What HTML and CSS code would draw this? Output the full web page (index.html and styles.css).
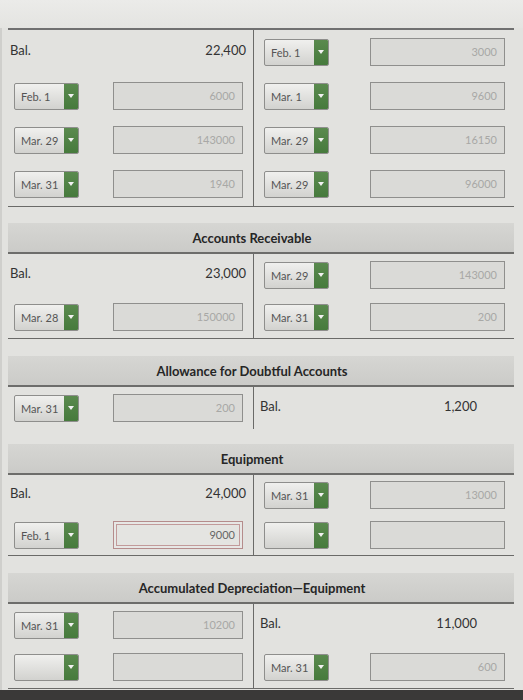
FILE: index.html
```html
<!DOCTYPE html>
<html>
<head>
<meta charset="utf-8">
<link rel="stylesheet" href="styles.css">
</head>
<body>
<div class="page">
  <div class="topstrip"></div>

  <section class="acct first">
    <div class="tbody tall">
      <div class="col left">
        <div class="row bal"><span>Bal.</span><span>22,400</span></div>
        <div class="row"><div class="dd"><span class="v">Feb. 1</span><span class="arr"></span></div><div class="inp">6000</div></div>
        <div class="row"><div class="dd"><span class="v">Mar. 29</span><span class="arr"></span></div><div class="inp">143000</div></div>
        <div class="row"><div class="dd"><span class="v">Mar. 31</span><span class="arr"></span></div><div class="inp">1940</div></div>
      </div>
      <div class="col right">
        <div class="row"><div class="dd"><span class="v">Feb. 1</span><span class="arr"></span></div><div class="inp">3000</div></div>
        <div class="row"><div class="dd"><span class="v">Mar. 1</span><span class="arr"></span></div><div class="inp">9600</div></div>
        <div class="row"><div class="dd"><span class="v">Mar. 29</span><span class="arr"></span></div><div class="inp">16150</div></div>
        <div class="row"><div class="dd"><span class="v">Mar. 29</span><span class="arr"></span></div><div class="inp">96000</div></div>
      </div>
    </div>
  </section>

  <section class="acct">
    <div class="title">Accounts Receivable</div>
    <div class="tbody">
      <div class="col left">
        <div class="row bal"><span>Bal.</span><span>23,000</span></div>
        <div class="row"><div class="dd"><span class="v">Mar. 28</span><span class="arr"></span></div><div class="inp">150000</div></div>
      </div>
      <div class="col right">
        <div class="row"><div class="dd"><span class="v">Mar. 29</span><span class="arr"></span></div><div class="inp">143000</div></div>
        <div class="row"><div class="dd"><span class="v">Mar. 31</span><span class="arr"></span></div><div class="inp">200</div></div>
      </div>
    </div>
  </section>

  <section class="acct narrow-gap">
    <div class="title">Allowance for Doubtful Accounts</div>
    <div class="tbody open">
      <div class="col left">
        <div class="row"><div class="dd"><span class="v">Mar. 31</span><span class="arr"></span></div><div class="inp">200</div></div>
      </div>
      <div class="col right">
        <div class="row bal"><span>Bal.</span><span>1,200</span></div>
      </div>
    </div>
  </section>

  <section class="acct">
    <div class="title">Equipment</div>
    <div class="tbody short">
      <div class="col left">
        <div class="row bal"><span>Bal.</span><span>24,000</span></div>
        <div class="row"><div class="dd"><span class="v">Feb. 1</span><span class="arr"></span></div><div class="inp err">9000</div></div>
      </div>
      <div class="col right">
        <div class="row"><div class="dd"><span class="v">Mar. 31</span><span class="arr"></span></div><div class="inp">13000</div></div>
        <div class="row"><div class="dd"><span class="v"></span><span class="arr"></span></div><div class="inp"></div></div>
      </div>
    </div>
  </section>

  <section class="acct last">
    <div class="title">Accumulated Depreciation&#8212;Equipment</div>
    <div class="tbody">
      <div class="col left">
        <div class="row"><div class="dd"><span class="v">Mar. 31</span><span class="arr"></span></div><div class="inp">10200</div></div>
        <div class="row"><div class="dd"><span class="v"></span><span class="arr"></span></div><div class="inp"></div></div>
      </div>
      <div class="col right">
        <div class="row bal"><span>Bal.</span><span>11,000</span></div>
        <div class="row"><div class="dd"><span class="v">Mar. 31</span><span class="arr"></span></div><div class="inp">600</div></div>
      </div>
    </div>
  </section>

  <div class="bottomstrip"></div>
</div>
</body>
</html>
```

FILE: styles.css
```css
*, *::before, *::after {
  box-sizing: border-box;
}
html, body {
  margin: 0;
  padding: 0;
}
body {
  width: 523px;
  height: 700px;
  overflow: hidden;
  background: #e2e2df;
  font-family: Lato, "Open Sans", sans-serif;
  color: #2e2e2e;
}
.page {
  display: flex;
  flex-direction: column;
  height: 700px;
  padding-left: 4px;
  border-left: 2px solid #cfcfcc;
}
.page > * {
  flex-shrink: 0;
}
.topstrip {
  height: 28px;
  margin-left: -6px;
  background: linear-gradient(#ebebe9, #e4e4e1);
}
.acct {
  width: 506px;
  margin-left: 2px;
  margin-bottom: 17px;
}
.acct.first {
  margin-bottom: 16px;
}
.acct.narrow-gap {
  margin-bottom: 15px;
}
.acct.last {
  margin-bottom: 0;
}
.title {
  height: 31px;
  background: linear-gradient(#d6d6d3, #cbcbc8);
  border-bottom: 2px solid #6d6d6b;
  font-weight: 700;
  font-size: 13px;
  line-height: 30px;
  text-align: center;
  color: #262626;
  padding-right: 18px;
}
.first .tbody {
  border-top: 2px solid #707070;
}
.tbody {
  display: grid;
  grid-template-columns: 246px 1fr;
  border-bottom: 1px solid #6a6a68;
}
.tbody.open {
  border-bottom: none;
}
.col.left {
  border-right: 1px solid #6a6a68;
  padding: 0 10px 0 6px;
}
.col.right {
  padding: 0 9px 0 10px;
}
.row {
  height: 42px;
  display: flex;
  align-items: center;
  justify-content: space-between;
}
.tall .row {
  height: 44px;
}
.short .row {
  height: 40px;
}
.row.bal {
  font-size: 13px;
  color: #333;
  padding-bottom: 4px;
}
.left .row.bal {
  margin-left: -4px;
  margin-right: -3px;
}
.right .row.bal {
  margin-left: -4px;
  padding-right: 28px;
}
.dd {
  width: 65px;
  height: 27px;
  display: flex;
  border: 1px solid #8e8e8c;
  border-radius: 2px;
  overflow: hidden;
  background: linear-gradient(#f0f0ee, #d2d2cf);
}
.dd .v {
  flex: 1;
  font-size: 11px;
  line-height: 25px;
  color: #555;
  padding-left: 6px;
  white-space: nowrap;
}
.dd .arr {
  width: 14px;
  background: linear-gradient(#5a8a4e, #467a3c);
  position: relative;
}
.dd .arr::after {
  content: "";
  position: absolute;
  left: 4px;
  top: 10px;
  border-left: 3px solid transparent;
  border-right: 3px solid transparent;
  border-top: 4px solid #f2f2f2;
}
.inp {
  width: 130px;
  height: 28px;
  border: 1px solid #8f8f8d;
  background: #dadad7;
  font-size: 11px;
  line-height: 26px;
  color: #a8a8a6;
  text-align: right;
  padding-right: 7px;
}
.right .inp {
  width: 135px;
}
.inp.err {
  border: 1px solid #b58c8c;
  box-shadow: inset 0 0 0 2px #e7e7e5, inset 0 0 0 3px #c29a9a;
  color: #666;
  background: #e4e4e1;
}
.bottomstrip {
  margin-top: auto;
  height: 10px;
  margin-left: -6px;
  background: #3a3938;
}
```
